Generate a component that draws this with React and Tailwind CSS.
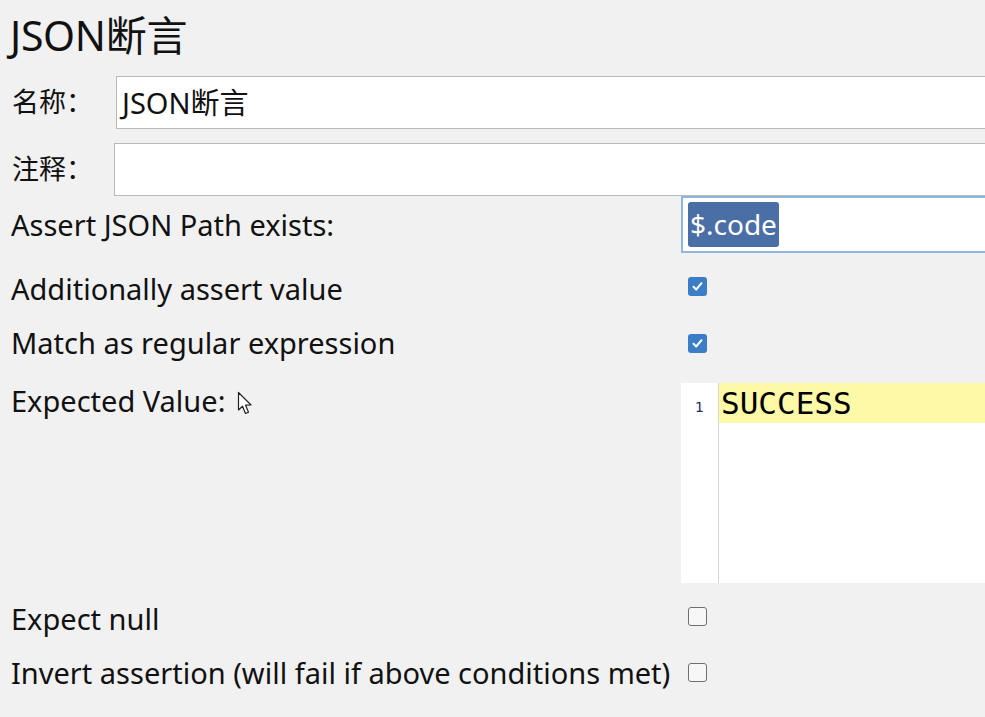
import React from "react";

const font = { fontFamily: '"Noto Sans", "Noto Sans CJK SC", sans-serif' };

function Check({ checked }) {
  if (checked) {
    return (
      <div className="w-[19px] h-[19px] rounded-[3px] bg-[#3c7dc8] flex items-center justify-center">
        <svg width="13" height="13" viewBox="0 0 13 13">
          <path d="M2.5 6.8 L5.2 9.5 L10.5 3.2" fill="none" stroke="#ffffff" strokeWidth="2" strokeLinecap="round" strokeLinejoin="round" />
        </svg>
      </div>
    );
  }
  return <div className="w-[19px] h-[19px] rounded-[3px] border-[1.5px] border-[#6f6f6f] bg-[#f7f7f7]" />;
}

export default function App() {
  return (
    <div className="w-[985px] h-[717px] overflow-hidden bg-[#f1f1f1] text-[#111]" style={font}>
      <div className="h-[76px] flex items-center pl-[10px] pb-[5px] text-[41px] tracking-[-0.3px]">JSON断言</div>
      <div className="flex h-[53px] items-center">
        <div className="w-[116px] pl-[12px] text-[27px]">名称：</div>
        <div className="flex-1 h-full bg-white border border-[#b9b9b9] border-r-0 flex items-center pl-[5px] text-[29px]">JSON断言</div>
      </div>
      <div className="flex h-[53px] items-center mt-[14px]">
        <div className="w-[114px] pl-[12px] text-[27px]">注释：</div>
        <div className="flex-1 h-full bg-white border border-[#b9b9b9] border-r-0" />
      </div>
      <div className="grid grid-cols-[681px_1fr] text-[29px]">
        <div className="h-[57px] flex items-center pl-[11px]">Assert JSON Path exists:</div>
        <div className="h-[57px] bg-white border-2 border-[#8fb6e3] border-r-0 flex items-center pl-[5px]">
          <span className="bg-[#4a6ea6] text-white rounded-[3px] px-[2px] leading-[45px] text-[28px]">$.code</span>
        </div>

        <div className="h-[62px] flex items-center pl-[11px] pt-[10px]">Additionally assert value</div>
        <div className="h-[62px] flex items-center pl-[7px] pt-[4px]"><Check checked /></div>

        <div className="h-[54px] flex items-center pl-[11px] pt-[2px]">Match as regular expression</div>
        <div className="h-[54px] flex items-center pl-[7px] pt-[2px]"><Check checked /></div>

        <div className="h-[214px] pl-[11px] pt-[10px] flex items-start">
          <span>Expected Value:</span>
          <svg className="ml-[12px] mt-[12px]" width="18" height="26" viewBox="0 0 18 26">
            <path d="M1.5 1.5 L1.5 19 L5.5 15.2 L8.5 22.5 L11.5 21.2 L8.6 14.2 L14 14 Z" fill="#ffffff" stroke="#222" strokeWidth="1.2" strokeLinejoin="round" />
          </svg>
        </div>
        <div className="h-[214px] pt-[14px]">
          <div className="h-[200px] bg-white flex">
            <div className="w-[38px] border-r border-[#d8d8d8] flex justify-center pt-[14px] text-[14px] text-[#2a2a5a]" style={{ fontFamily: '"DejaVu Sans", sans-serif' }}>1</div>
            <div className="flex-1">
              <div className="h-[40px] bg-[#fdf9a6] flex items-center pl-[2px] text-[31px] text-black" style={{ fontFamily: '"DejaVu Sans Mono", monospace' }}>SUCCESS</div>
            </div>
          </div>
        </div>

        <div className="h-[64px] flex items-center pl-[11px] pt-[8px]">Expect null</div>
        <div className="h-[64px] flex items-center pl-[7px] pt-[2px]"><Check /></div>

        <div className="h-[50px] flex items-center pl-[11px] pt-[2px]">Invert assertion (will fail if above conditions met)</div>
        <div className="h-[50px] flex items-center pl-[7px]"><Check /></div>
      </div>
    </div>
  );
}
